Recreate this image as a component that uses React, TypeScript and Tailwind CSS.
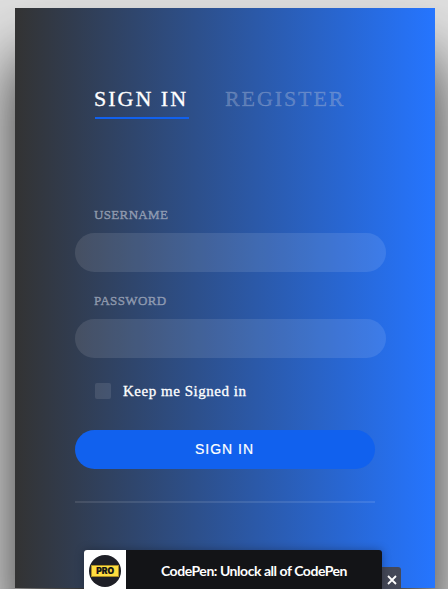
function Field({ label, type }: { label: string; type: string }) {
  return (
    <label className="block h-[86px]">
      <span className="block h-[26px] pl-[19px] text-[13px] leading-[16px] tracking-[0.35px] text-[#aab2c2]/65 [-webkit-text-stroke:0.5px]">
        {label}
      </span>
      <input
        type={type}
        className="block h-[39px] w-[311px] rounded-[25px] bg-white/10 px-5 text-white outline-none"
      />
    </label>
  );
}

export default function App() {
  return (
    <div className="relative h-[589px] w-full overflow-hidden bg-[#dfdfdf] px-[15px] pt-2 font-['Liberation_Serif',serif]">
      <main className="h-[580px] w-[420px] bg-linear-to-r/srgb from-[#333333] from-0% to-[#2575ff] to-100% px-[60px] pt-[77px] shadow-[0_50px_60px_0_rgba(0,0,0,0.8)]">
        <nav className="flex h-[121px] items-start pl-5 text-[22px] leading-[27px]">
          <button className="h-[34px] w-[94px] border-b-2 border-[#1161ee] pb-[5px] text-left leading-[27px] tracking-[2px] whitespace-nowrap text-white [-webkit-text-stroke:0.3px]">
            <span className="-ml-px">SIGN IN</span>
          </button>
          <button className="ml-9 leading-[27px] tracking-[1.9px] text-[#a5b5d5]/40 [-webkit-text-stroke:0.4px]">
            REGISTER
          </button>
        </nav>

        <form>
          <div className="h-[177px] pt-[1px]">
            <Field label="USERNAME" type="text" />
            <Field label="PASSWORD" type="password" />
          </div>
          <label className="flex h-[47px] items-start pl-5 text-white">
            <span className="h-4 w-4 rounded-[2px] bg-white/10" />
            <span className="ml-3 text-[15px] leading-4 tracking-[0.53px] [-webkit-text-stroke:0.3px]">
              Keep me Signed in
            </span>
          </label>
          <button
            type="button"
            className="block h-[39px] w-[300px] rounded-[25px] bg-[#1161ee] pr-px font-['Liberation_Sans',sans-serif] text-[14px] tracking-[1px] text-white [-webkit-text-stroke:0.2px]"
          >
            SIGN IN
          </button>
          <hr className="mt-8 h-[2px] border-0 bg-white/10" />
        </form>
      </main>

      <div className="absolute top-[550px] left-[84px] flex h-[39px] w-[317px] font-['Lato',sans-serif]">
        <div className="z-10 flex w-[298px] overflow-hidden rounded-t-[3px] bg-[#131417] shadow-[0_0_10px_rgba(0,0,0,0.3)]">
          <div className="flex w-[42px] justify-center bg-white pt-1">
            <svg width="34" height="34" viewBox="0 0 34 34" aria-label="PRO">
              <circle cx="17" cy="17" r="16" fill="#1e1f26" />
              <rect x="3.5" y="11.5" width="27" height="11" fill="#ffdd40" stroke="#a98b23" strokeWidth="1" />
              <text x="17.2" y="20" textAnchor="middle" fontFamily="Inter" fontWeight="900" fontSize="8.5" fill="#131417" stroke="#131417" strokeWidth="0.2">PRO</text>
            </svg>
          </div>
          <p className="h-[39px] flex-1 pt-[11px] text-center text-[14px] leading-[20px] font-bold tracking-[-0.46px] whitespace-nowrap text-white">
            CodePen: Unlock all of CodePen
          </p>
        </div>
        <button aria-label="Close" className="mt-[17px] flex h-[22px] w-[19px] justify-center rounded-tr-[3px] bg-[#444857] pt-[8px]">
          <svg width="10" height="10" viewBox="0 0 10 10" stroke="white" strokeWidth="1.8">
            <path d="M1 1 9 9M9 1 1 9" />
          </svg>
        </button>
      </div>
    </div>
  );
}
